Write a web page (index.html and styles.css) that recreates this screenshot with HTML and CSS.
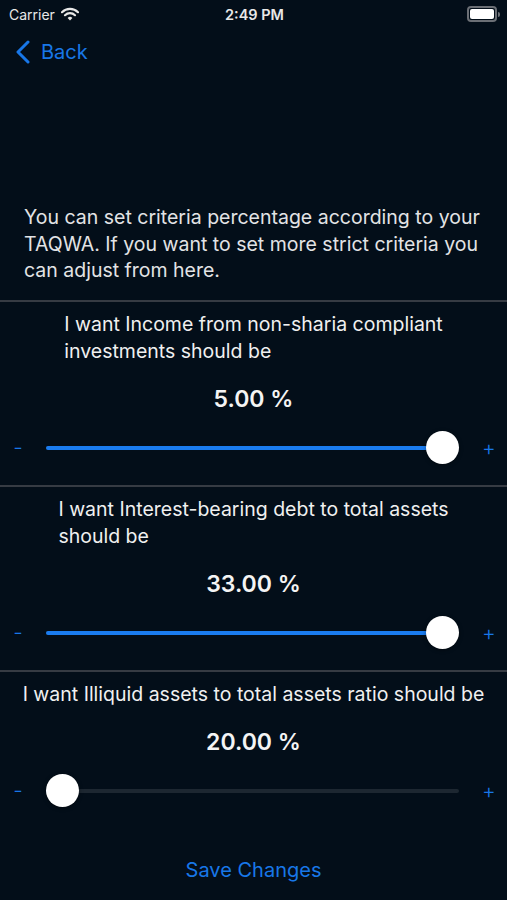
FILE: index.html
```html
<!DOCTYPE html>
<html lang="en">
<head>
<meta charset="UTF-8">
<meta name="viewport" content="width=device-width, initial-scale=1.0">
<title>Criteria</title>
<link rel="stylesheet" href="styles.css">
</head>
<body>

<div class="status-bar">
  <div class="carrier">Carrier
    <svg class="wifi" width="18" height="14" viewBox="0 0 18 14">
      <path d="M1 5.2 A11.5 11.5 0 0 1 17 5.2" fill="none" stroke="#e8e8e8" stroke-width="2.2" stroke-linecap="round"/>
      <path d="M4 8.2 A7.3 7.3 0 0 1 14 8.2" fill="none" stroke="#e8e8e8" stroke-width="2.2" stroke-linecap="round"/>
      <path d="M6.6 11 L9 13.4 L11.4 11 A3.4 3.4 0 0 0 6.6 11 Z" fill="#e8e8e8"/>
    </svg>
  </div>
  <div class="time">2:49 PM</div>
  <div class="battery">
    <div class="battery-body"><div class="battery-level"></div></div>
    <div class="battery-cap"></div>
  </div>
</div>

<div class="nav">
  <a class="back" href="#">
    <svg width="16" height="24" viewBox="0 0 16 24">
      <path d="M13 2 L3 12 L13 22" fill="none" stroke="#1877e8" stroke-width="3" stroke-linecap="round" stroke-linejoin="round"/>
    </svg>
    Back
  </a>
</div>

<p class="intro">You can set criteria percentage according to your TAQWA. If you want to set more strict criteria you can adjust from here.</p>

<div class="section">
  <div class="label-wrap"><div class="label">I want Income from non-sharia compliant<br>investments should be</div></div>
  <div class="value">5.00 %</div>
  <div class="slider-row">
    <span class="step">-</span>
    <div class="track">
      <div class="fill" style="width: 96%"></div>
      <div class="thumb" style="left: 96%"></div>
    </div>
    <span class="step">+</span>
  </div>
</div>

<div class="section">
  <div class="label-wrap"><div class="label">I want Interest-bearing debt to total assets<br>should be</div></div>
  <div class="value">33.00 %</div>
  <div class="slider-row">
    <span class="step">-</span>
    <div class="track">
      <div class="fill" style="width: 96%"></div>
      <div class="thumb" style="left: 96%"></div>
    </div>
    <span class="step">+</span>
  </div>
</div>

<div class="section last">
  <div class="label-wrap"><div class="label">I want Illiquid assets to total assets ratio should be</div></div>
  <div class="value">20.00 %</div>
  <div class="slider-row">
    <span class="step">-</span>
    <div class="track">
      <div class="fill" style="width: 4%"></div>
      <div class="thumb" style="left: 4%"></div>
    </div>
    <span class="step">+</span>
  </div>
</div>

<div class="save-wrap">
  <a class="save" href="#">Save Changes</a>
</div>

</body>
</html>
```

FILE: styles.css
```css
body {
  margin: 0;
  background-color: #030e19;
  color: #eeeeee;
  font-family: Inter, "Liberation Sans", sans-serif;
  width: 507px;
  height: 900px;
  overflow: hidden;
}
.status-bar {
  height: 28px;
  display: flex;
  align-items: center;
  justify-content: space-between;
  padding: 0 7px 0 9px;
  font-size: 14px;
  color: #e8e8e8;
}
.carrier {
  display: flex;
  align-items: center;
  gap: 6px;
  width: 120px;
}
.time {
  font-weight: 600;
  font-size: 14.5px;
}
.battery {
  width: 120px;
  display: flex;
  justify-content: flex-end;
  align-items: center;
}
.battery-body {
  width: 24px;
  height: 10px;
  border: 2px solid #6b6f75;
  border-radius: 4px;
  padding: 1px;
}
.battery-level {
  width: 100%;
  height: 100%;
  background-color: #ffffff;
  border-radius: 2px;
}
.battery-cap {
  width: 2px;
  height: 5px;
  background-color: #6b6f75;
  border-radius: 0 2px 2px 0;
  margin-left: 1px;
}
.nav {
  height: 48px;
  display: flex;
  align-items: center;
  padding-left: 15px;
}
.back {
  display: flex;
  align-items: center;
  gap: 10px;
  color: #1877e8;
  text-decoration: none;
  font-size: 20px;
}
.intro {
  margin: 128px 0 16px;
  padding: 0 20px 0 24px;
  font-size: 19.5px;
  line-height: 26.5px;
  color: #e2e3e5;
}
.section {
  border-top: 2px solid #363b43;
  padding: 9px 0 20px;
}
.section.last {
  padding-bottom: 0;
}
.label-wrap {
  text-align: center;
}
.label {
  display: inline-block;
  text-align: left;
  font-size: 19.5px;
  line-height: 27px;
  color: #f0f0f0;
}
.value {
  margin-top: 20px;
  text-align: center;
  font-size: 23px;
  font-weight: 600;
  line-height: 28px;
  color: #f4f4f4;
}
.slider-row {
  margin-top: 18px;
  height: 34px;
  display: flex;
  align-items: center;
  padding: 0 13px 0 12px;
}
.step {
  width: 12px;
  text-align: center;
  color: #1877e8;
  font-size: 21px;
  font-weight: 300;
  line-height: 34px;
}
.track {
  flex: 1;
  margin: 0 23px 0 22px;
  height: 4px;
  border-radius: 2px;
  background-color: #1d2731;
  position: relative;
}
.fill {
  height: 100%;
  border-radius: 2px;
  background-color: #1a7cf0;
}
.thumb {
  position: absolute;
  top: 50%;
  width: 33px;
  height: 33px;
  margin: -16.5px 0 0 -16.5px;
  border-radius: 50%;
  background-color: #ffffff;
  box-shadow: 0 1px 4px rgba(0, 0, 0, 0.4);
}
.save-wrap {
  margin-top: 50px;
  text-align: center;
}
.save {
  color: #1877e8;
  font-size: 20px;
  text-decoration: none;
}
```
